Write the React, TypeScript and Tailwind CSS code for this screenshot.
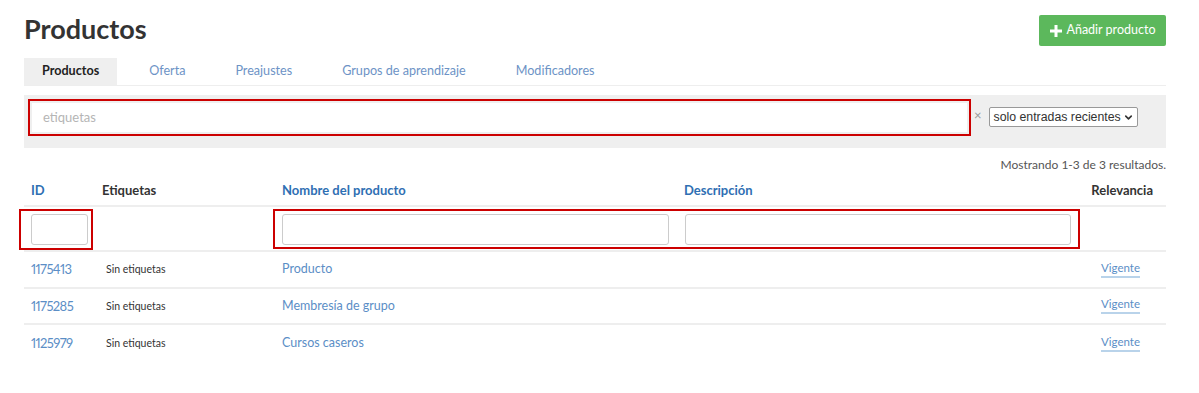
import React from 'react';
import { ChevronDown } from 'lucide-react';

const tabs = ['Productos', 'Oferta', 'Preajustes', 'Grupos de aprendizaje', 'Modificadores'];

const rows = [
  { id: '1175413', name: 'Producto' },
  { id: '1175285', name: 'Membresía de grupo' },
  { id: '1125979', name: 'Cursos caseros' },
];

export default function App() {
  return (
    <div className="min-h-[393px] w-full bg-white font-['Lato','Open_Sans',sans-serif] text-[#333]">
      <div className="px-6 pt-[15px]">
        {/* Title + action */}
        <div className="flex items-start justify-between">
          <h1 className="mt-[-2px] text-[27px] font-bold leading-[32px] text-[#333]">Productos</h1>
          <button className="mr-[9px] flex h-[31px] w-[127px] items-center justify-center gap-[5px] rounded-[2px] bg-[#5cb85c] text-[12.5px] text-white">
            <svg width="12" height="12" viewBox="0 0 12 12" className="fill-white">
              <path d="M4.5 0h3v4.5H12v3H7.5V12h-3V7.5H0v-3h4.5z" />
            </svg>
            Añadir producto
          </button>
        </div>

        {/* Tabs */}
        <div className="mr-[9px] mt-[12px] flex h-[28px] border-b border-[#eee]">
          {tabs.map((t, i) => (
            <div
              key={t}
              className={`flex items-center text-[12.6px] ${
                i === 0 ? 'mr-[7px] bg-[#efefef] px-[18px] font-bold text-[#222]' : 'px-[25px] text-[#6d93c6]'
              }`}
            >
              {t}
            </div>
          ))}
        </div>

        {/* Filter bar */}
        <div className="mr-[9px] mt-[9px] flex h-[53px] items-start bg-[#efefef] px-1 pt-1">
          <div className="h-[37px] w-[943px] border-2 border-[#c00] p-[2px]">
            <div className="flex h-full items-center bg-white px-[11px] text-[13px] text-[#b5b5b5]">etiquetas</div>
          </div>
          <span className="ml-[3px] mt-[10px] text-[13px] leading-none text-[#999]">×</span>
          <div className="ml-[7px] mt-[8px] flex h-[20px] w-[149px] items-center gap-[2px] whitespace-nowrap rounded-[2px] border border-[#999] bg-white pl-[4px] font-['Liberation_Sans',sans-serif] text-[12.3px] text-[#333]">
            solo entradas recientes
            <ChevronDown size={11} strokeWidth={3.5} className="shrink-0" />
          </div>
        </div>

        {/* Results count */}
        <div className="mr-[9px] mt-[9px] text-right text-[12px] leading-4 text-[#555]">Mostrando 1-3 de 3 resultados.</div>

        {/* Table */}
        <div className="mr-[9px] mt-[9px] grid grid-cols-[71px_180px_402px_401px_1fr] text-[13px] leading-[16px]">
          <div className="border-b-2 border-[#eee] pb-[7px] pl-[7px] font-bold text-[#2f6fb3]">ID</div>
          <div className="border-b-2 border-[#eee] pb-[7px] pl-[7px] font-bold text-[#333]">Etiquetas</div>
          <div className="border-b-2 border-[#eee] pb-[7px] pl-[7px] font-bold text-[#2f6fb3]">Nombre del producto</div>
          <div className="border-b-2 border-[#eee] pb-[7px] pl-[7px] font-bold text-[#2f6fb3]">Descripción</div>
          <div className="border-b-2 border-[#eee] pb-[7px] pr-[13px] text-right font-bold text-[#333]">Relevancia</div>

          {/* filter row */}
          <div className="h-[45px] border-b-2 border-[#eee]">
            <div className="ml-[-5px] mt-[2px] h-[41px] w-[74px] border-2 border-[#c00] pl-[10px] pt-[3px]">
              <div className="h-[31px] w-[57px] rounded-[3px] border border-[#ccc] bg-white" />
            </div>
          </div>
          <div className="h-[45px] border-b-2 border-[#eee]" />
          <div className="col-span-2 h-[45px] border-b-2 border-[#eee]">
            <div className="ml-[-2px] mt-[2px] grid h-[40px] w-[807px] grid-cols-2 gap-[16px] border-2 border-[#c00] px-[7px] pt-[3px]">
              <div className="h-[31px] rounded-[3px] border border-[#ccc] bg-white" />
              <div className="h-[31px] rounded-[3px] border border-[#ccc] bg-white" />
            </div>
          </div>
          <div className="h-[45px] border-b-2 border-[#eee]" />

          {rows.map((r, i) => {
            const line = i < rows.length - 1 ? 'border-b-2 border-[#eee]' : '';
            return (
              <React.Fragment key={r.id}>
                <div className={`flex h-[36.5px] items-center pl-[7px] text-[13px] tracking-[-0.6px] text-[#5b8ec6] proportional-nums ${line}`}>{r.id}</div>
                <div className={`flex h-[36.5px] items-center pl-[11px] text-[10.5px] text-[#333] ${line}`}>Sin etiquetas</div>
                <div className={`flex h-[36.5px] items-center pl-[7px] text-[12.5px] text-[#5b8ec6] ${line}`}>{r.name}</div>
                <div className={`h-[36.5px] ${line}`} />
                <div className={`flex h-[36.5px] items-center justify-end pr-[26px] ${line}`}>
                  <span className="border-b-2 border-[#b9d3ea] pb-[1px] text-[11.5px] leading-[14px] text-[#5b8ec6]">Vigente</span>
                </div>
              </React.Fragment>
            );
          })}
        </div>
      </div>
    </div>
  );
}
